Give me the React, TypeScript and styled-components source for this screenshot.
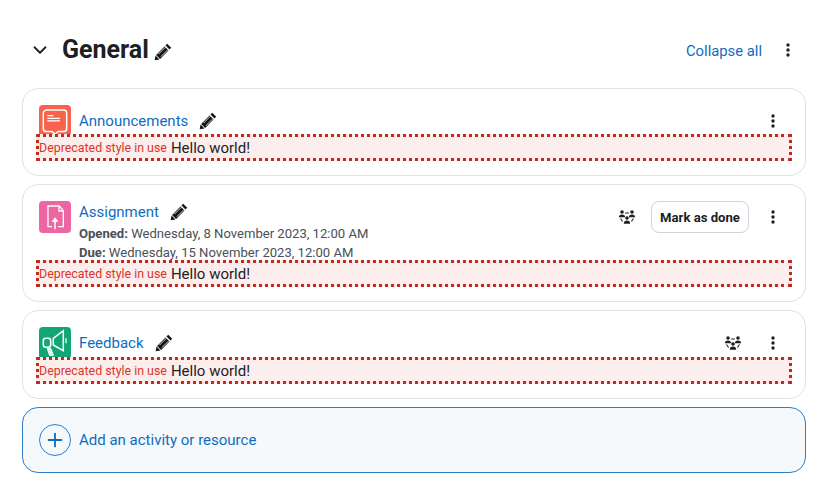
import styled, { createGlobalStyle } from "styled-components";
import { ChevronDown, Plus } from "lucide-react";

const GlobalStyle = createGlobalStyle`
  html, body {
    margin: 0;
    background: #fff;
    font-family: Roboto, "Liberation Sans", sans-serif;
    color: #1d2125;
  }
`;

const Pencil = () => (
  <svg width="18" height="18" viewBox="0 0 18 18" aria-hidden="true">
    <path d="M13.200.8 17.200 4.800l-1.700 1.700-4-4zM10.500 3.500l4 4-8.400 8.400-4-4z" fill="#111417" />
    <path d="M1.500 12.500 5.500 16.500.7 17.300z" fill="#111417" />
    <path d="M4.300 11.300 11.300 4.300" stroke="#fff" strokeWidth="0.800" />
    <path d="M6.900 13.700 13.700 6.900" stroke="#fff" strokeWidth="0.800" />
  </svg>
);

const Kebab = () => (
  <svg width="4" height="14" viewBox="0 0 4 14" aria-hidden="true">
    <circle cx="2" cy="2" r="1.700" fill="#1d2125" />
    <circle cx="2" cy="7" r="1.700" fill="#1d2125" />
    <circle cx="2" cy="12" r="1.700" fill="#1d2125" />
  </svg>
);

const Groups = () => (
  <svg width="18" height="14" viewBox="0 0 18 14" aria-hidden="true" fill="#1d2125">
    <circle cx="4" cy="2" r="1.800" />
    <path d="M.8 7.200c0-1.700 1.300-2.800 3.200-2.800s3.200 1.100 3.200 2.800z" />
    <circle cx="14" cy="2" r="1.800" />
    <path d="M10.800 7.200c0-1.700 1.300-2.800 3.200-2.800s3.200 1.100 3.200 2.800z" />
    <circle cx="9" cy="8" r="1.800" />
    <path d="M5.800 13.800c0-2 1.300-3.200 3.200-3.200s3.200 1.200 3.200 3.200z" />
    <path d="M7.200 2.500h3.600v1H7.200zM3 8.200l2 3-.9.600-2-3zM15 8.200l-2 3 .9.600 2-3z" />
  </svg>
);

const ForumIcon = () => (
  <svg width="32" height="32" viewBox="0 0 32 32" fill="none" stroke="#fff" aria-hidden="true">
    <path d="M7.500 5h17a3.200 3.200 0 0 1 3.200 3.200v15.200a3.200 3.200 0 0 1-3.200 3.200h-5.500L16 29l-3-2.400H7.500a3.200 3.200 0 0 1-3.200-3.200V8.200A3.200 3.200 0 0 1 7.500 5z" strokeWidth="1.500" />
    <path d="M8.300 10.700h6M8.300 13.300H21M8.300 15.800H21" strokeWidth="1.200" />
  </svg>
);

const AssignIcon = () => (
  <svg width="32" height="32" viewBox="0 0 32 32" fill="none" stroke="#fff" aria-hidden="true">
    <path d="M13 25.700H9V5h11.300l4 4.700v16H19M20 5v5h4.300" strokeWidth="1.300" />
    <path d="M16 28.300V20" strokeWidth="1.600" />
    <path d="M12.500 20.800 16 16.300l3.500 4.500z" fill="#fff" strokeWidth="0" />
  </svg>
);

const FeedbackIcon = () => (
  <svg width="32" height="32" viewBox="0 0 32 32" fill="none" stroke="#fff" aria-hidden="true">
    <path d="M14.300 11.300 24.300 3.700v20L14.300 18z" strokeWidth="1.500" />
    <rect x="4.300" y="11.300" width="7.400" height="9" rx="2.500" strokeWidth="1.600" />
    <path d="M8.200 21.500h3.800l2.500 7H10.500z" fill="#dff3ec" stroke="#fff" strokeWidth="0.800" />
    <path d="M27 11.300v5" strokeWidth="1.200" />
  </svg>
);

const Page = styled.main`
  display: flex;
  flex-direction: column;
  gap: 8px;
  padding: 32px 21px 24px 22px;
`;

const SectionHeader = styled.header`
  display: flex;
  align-items: center;
  height: 36px;
  margin-bottom: 12px;
`;

const Toggle = styled.span`
  display: flex;
  width: 36px;
  padding-left: 7px;
  box-sizing: border-box;
  color: #1d2125;
`;

const Title = styled.h2`
  margin: 0 0 0 4px;
  font-size: 25px;
  font-weight: 700;
  line-height: 36px;
`;

const TitlePencil = styled.span`
  display: flex;
  margin: 4px 0 0 5px;
`;

const CollapseAll = styled.a`
  margin-left: auto;
  margin-right: 24px;
  padding-top: 2px;
  font-size: 14.800px;
  color: #0f6cbf;
`;

const KebabSlot = styled.span<{ $right?: number }>`
  display: flex;
  width: 4px;
  margin-right: ${(p) => p.$right ?? 14}px;
`;

const Card = styled.article`
  border: 1px solid #dee2e6;
  border-radius: 16px;
  padding: 16px 16px 14px;
`;

const Row = styled.div`
  display: flex;
  align-items: flex-start;
`;

const IconTile = styled.div<{ $bg: string }>`
  flex: none;
  width: 32px;
  height: 32px;
  border-radius: 4px;
  background: ${(p) => p.$bg};
  display: flex;
`;

const Body = styled.div`
  flex: 1;
  margin-left: 8px;
`;

const NameLine = styled.div<{ $lift?: number }>`
  display: flex;
  align-items: center;
  height: 32px;
  margin-top: ${(p) => p.$lift ?? 0}px;
`;

const Name = styled.a`
  font-size: 15px;
  color: #0f6cbf;
  margin-right: 11px;
`;

const Dates = styled.div`
  font-size: 13.090px;
  line-height: 19px;
  color: #495057;
  margin-top: -4px;

  strong {
    font-weight: 700;
  }
`;

const Actions = styled.div`
  display: flex;
  align-items: center;
  height: 32px;
`;

const GroupSlot = styled.span<{ $gap: number }>`
  display: flex;
  margin-right: ${(p) => p.$gap}px;
`;

const DoneButton = styled.button`
  height: 32px;
  width: 98px;
  margin-left: -8px;
  margin-right: 22px;
  padding: 0;
  border: 1px solid #ced4da;
  border-radius: 8px;
  background: #fff;
  color: #1d2125;
  font: 700 13.125px Roboto, sans-serif;
`;

const Deprecated = styled.div<{ $pull: number }>`
  position: relative;
  margin: ${(p) => p.$pull}px -3px 0;
  border: 3px dotted #c5281c;
  background: #fceeed;
  height: 21px;
  display: flex;
  align-items: center;
  font-size: 15px;
`;

const Warning = styled.span`
  font-size: 12.400px;
  color: #d9352a;
  margin-right: 4px;
`;

const AddActivity = styled.a`
  display: flex;
  align-items: center;
  height: 64px;
  padding: 0 16px;
  border: 1px solid #2a7fc9;
  border-radius: 16px;
  background: #f5f9fc;
  color: #0f6cbf;
  font-size: 15px;
`;

const PlusCircle = styled.span`
  display: flex;
  align-items: center;
  justify-content: center;
  box-sizing: border-box;
  width: 32px;
  height: 32px;
  margin-right: 8px;
  border: 1px solid #2a7fc9;
  border-radius: 50%;
`;

const DeprecatedRow = ({ pull }: { pull: number }) => (
  <Deprecated $pull={pull}>
    <Warning>Deprecated style in use</Warning> Hello world!
  </Deprecated>
);

export default function App() {
  return (
    <>
      <GlobalStyle />
      <Page>
        <SectionHeader>
          <Toggle>
            <ChevronDown size={22} strokeWidth={2} />
          </Toggle>
          <Title>General</Title>
          <TitlePencil>
            <Pencil />
          </TitlePencil>
          <CollapseAll>Collapse all</CollapseAll>
          <KebabSlot $right={16}>
            <Kebab />
          </KebabSlot>
        </SectionHeader>

        <Card>
          <Row>
            <IconTile $bg="#f7634d">
              <ForumIcon />
            </IconTile>
            <Body>
              <NameLine>
                <Name>Announcements</Name>
                <Pencil />
              </NameLine>
            </Body>
            <Actions>
              <KebabSlot>
                <Kebab />
              </KebabSlot>
            </Actions>
          </Row>
          <DeprecatedRow pull={-3} />
        </Card>

        <Card>
          <Row>
            <IconTile $bg="#eb66a2">
              <AssignIcon />
            </IconTile>
            <Body>
              <NameLine $lift={-5}>
                <Name>Assignment</Name>
                <Pencil />
              </NameLine>
              <Dates>
                <div>
                  <strong>Opened:</strong> Wednesday, 8 November 2023, 12:00 AM
                </div>
                <div>
                  <strong>Due:</strong> Wednesday, 15 November 2023, 12:00 AM
                </div>
              </Dates>
            </Body>
            <Actions>
              <GroupSlot $gap={23}>
                <Groups />
              </GroupSlot>
              <DoneButton>Mark as done</DoneButton>
              <KebabSlot>
                <Kebab />
              </KebabSlot>
            </Actions>
          </Row>
          <DeprecatedRow pull={-2} />
        </Card>

        <Card>
          <Row>
            <IconTile $bg="#11a676">
              <FeedbackIcon />
            </IconTile>
            <Body>
              <NameLine>
                <Name>Feedback</Name>
                <Pencil />
              </NameLine>
            </Body>
            <Actions>
              <GroupSlot $gap={29}>
                <Groups />
              </GroupSlot>
              <KebabSlot>
                <Kebab />
              </KebabSlot>
            </Actions>
          </Row>
          <DeprecatedRow pull={-2} />
        </Card>

        <AddActivity>
          <PlusCircle>
            <Plus size={22} strokeWidth={2} />
          </PlusCircle>
          Add an activity or resource
        </AddActivity>
      </Page>
    </>
  );
}
